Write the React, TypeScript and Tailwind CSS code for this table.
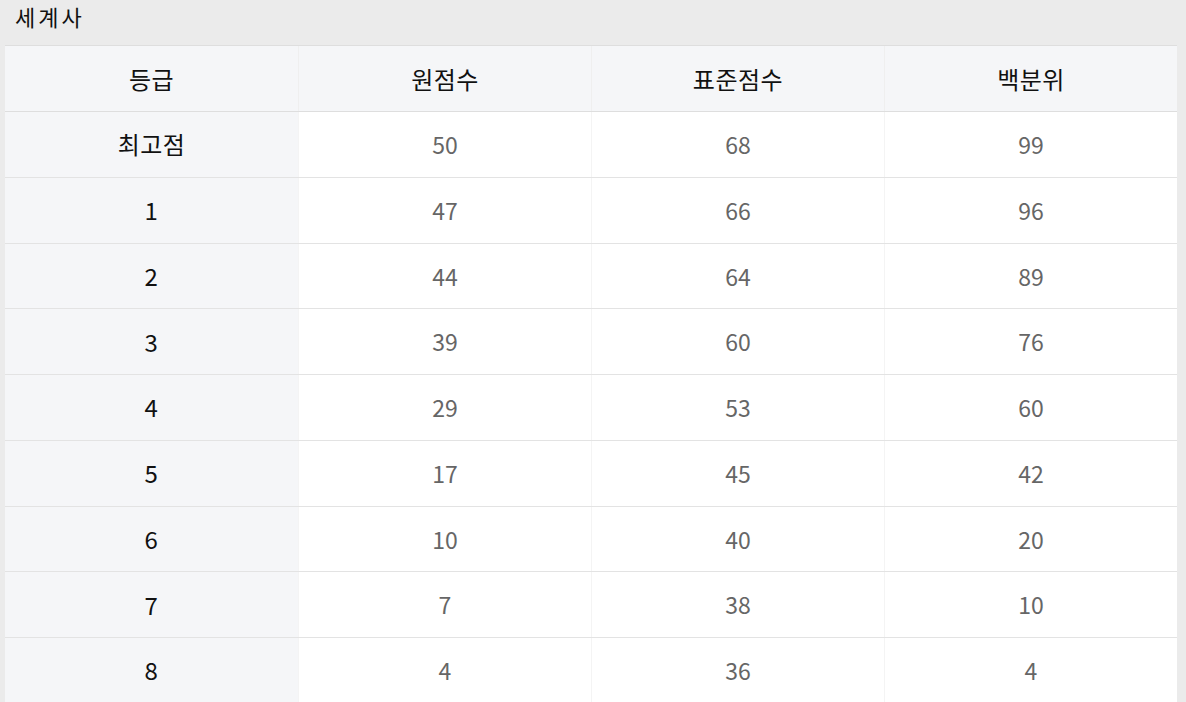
const rows = [
  ["최고점", "50", "68", "99"],
  ["1", "47", "66", "96"],
  ["2", "44", "64", "89"],
  ["3", "39", "60", "76"],
  ["4", "29", "53", "60"],
  ["5", "17", "45", "42"],
  ["6", "10", "40", "20"],
  ["7", "7", "38", "10"],
  ["8", "4", "36", "4"],
];

const font = { fontFamily: '"Noto Sans CJK KR", "Noto Sans", sans-serif' };

export default function App() {
  return (
    <div className="min-h-[702px] w-[1186px] bg-[#ebebeb]" style={font}>
      <div className="h-[45px] pl-[15px] pt-[0px] text-[22px] leading-[32px] tracking-[3px] text-[#111]">세계사</div>
      <div className="ml-[5px] w-[1172px]">
        <div className="grid grid-cols-4 border-t border-b border-[#dedede] bg-[#f5f6f8]">
          {["등급", "원점수", "표준점수", "백분위"].map((h, i) => (
            <div
              key={h}
              className={`flex h-[65px] items-center justify-center text-[24px] tracking-[0.5px] text-[#111] ${i > 0 ? "border-l border-[#efefef]" : ""}`}
            >
              {h}
            </div>
          ))}
        </div>
        {rows.map((r) => (
          <div key={r[0]} className="grid grid-cols-4 border-b border-[#e3e3e3] bg-white">
            {r.map((c, i) => (
              <div
                key={i}
                className={`flex h-[64.75px] items-center justify-center ${
                  i === 0 ? "bg-[#f5f6f8] text-[#111] text-[24px] tracking-[0.5px]" : "text-[#666] text-[23px] border-l border-[#f4f4f4]"
                }`}
              >
                {c}
              </div>
            ))}
          </div>
        ))}
      </div>
    </div>
  );
}
